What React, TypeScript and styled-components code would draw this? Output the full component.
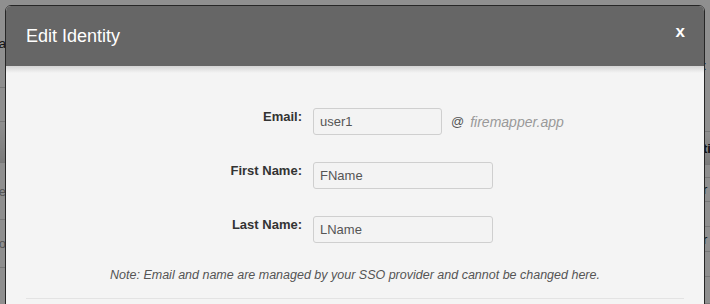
import styled, { createGlobalStyle } from "styled-components";

const GlobalStyle = createGlobalStyle`
  html, body {
    margin: 0;
    padding: 0;
    width: 710px;
    height: 304px;
    overflow: hidden;
    font-family: "Liberation Sans", Arial, Helvetica, sans-serif;
    background: #fff;
  }
`;

// page behind the dialog, only its edges are visible
const PageBehind = styled.div`
  display: flex;
  justify-content: space-between;
  width: 710px;
  height: 304px;
  background: #fff;
`;

const PageCol = styled.div<{ $side: "left" | "right" }>`
  width: ${(p) => (p.$side === "left" ? "6px" : "8px")};
  display: flex;
  flex-direction: column;
  overflow: hidden;
`;

const PageRow = styled.div<{ $h: number; $head?: boolean; $side: "left" | "right" }>`
  height: ${(p) => p.$h}px;
  flex: none;
  box-sizing: border-box;
  border-bottom: 1px solid #d6d6d6;
  background: ${(p) => (p.$head ? "linear-gradient(#ffffff, #dcdcdc)" : "#fff")};
  display: flex;
  align-items: center;
  justify-content: ${(p) => (p.$side === "left" ? "flex-end" : "flex-start")};
  white-space: nowrap;
  font-size: 13px;
  font-weight: ${(p) => (p.$head ? 700 : 400)};
  color: #222;
  padding-left: ${(p) => (p.$side === "right" ? "1px" : "0")};
`;

const Faint = styled.span`
  color: #999;
`;

const Backdrop = styled.div`
  position: fixed;
  inset: 0;
  background: rgba(0, 0, 0, 0.44);
`;

const Modal = styled.div`
  position: fixed;
  top: 5px;
  left: 5px;
  width: 700px;
  height: 330px;
  box-sizing: border-box;
  border: 1px solid #262626;
  border-radius: 6px;
  overflow: hidden;
  background: #f4f4f4;
  display: flex;
  flex-direction: column;
`;

const Header = styled.div`
  height: 60px;
  flex: none;
  background: #666;
  display: flex;
  align-items: center;
  justify-content: space-between;
  padding: 0 19px 0 20px;
  color: #fff;
`;

const Title = styled.h4`
  margin: 0;
  font-size: 18px;
  font-weight: 400;
  padding-top: 1px;
`;

const CloseButton = styled.button`
  background: none;
  border: none;
  padding: 0;
  margin-top: -10px;
  color: #fff;
  font-family: inherit;
  font-size: 17px;
  font-weight: 700;
  line-height: 1;
  cursor: pointer;
`;

const Body = styled.div`
  padding: 42px 20px 0;
  background: linear-gradient(#d4d4d4, #f4f4f4 7px);
  display: flex;
  flex-direction: column;
`;

const FormRow = styled.div`
  display: grid;
  grid-template-columns: 276px auto;
  column-gap: 11px;
  align-items: start;
  margin-bottom: 27px;
`;

const Label = styled.label`
  text-align: right;
  font-size: 13px;
  font-weight: 700;
  line-height: 18px;
  color: #333;
`;

const Field = styled.div`
  display: flex;
  align-items: center;
`;

const Input = styled.input<{ $w: number }>`
  width: ${(p) => p.$w}px;
  height: 27px;
  box-sizing: border-box;
  border: 1px solid #cfcfcf;
  border-radius: 3px;
  background: #f3f3f3;
  padding: 0 6px;
  font-family: "Liberation Sans", Arial, sans-serif;
  font-size: 13px;
  color: #555;
  outline: none;
`;

const At = styled.span`
  margin-left: 9px;
  font-size: 13px;
  color: #555;
`;

const Domain = styled.span`
  margin-left: 6px;
  font-size: 14px;
  font-style: italic;
  color: #999;
`;

const Note = styled.p`
  margin: -3px 0 0;
  text-align: center;
  font-size: 12.5px;
  font-style: italic;
  line-height: 17px;
  color: #555;
`;

const Divider = styled.hr`
  margin: 14px 0 0;
  border: none;
  border-top: 1px solid #e3e3e3;
`;

const leftRows = [
  { h: 88, text: "a" },
  { h: 34 },
  { h: 41, head: true },
  { h: 57, text: "e", faint: true },
  { h: 48, text: "o", faint: true },
  { h: 40 },
];

const rightRows = [
  { h: 132, text: ":" },
  { h: 33, text: "ti", head: true },
  { h: 13 },
  { h: 24, text: "r" },
  { h: 25 },
  { h: 25, text: "r" },
  { h: 25 },
  { h: 27 },
];

export default function App() {
  return (
    <>
      <GlobalStyle />
      <PageBehind>
        <PageCol $side="left">
          {leftRows.map((r, i) => (
            <PageRow key={i} $h={r.h} $head={r.head} $side="left">
              {r.faint ? <Faint>{r.text}</Faint> : r.text}
            </PageRow>
          ))}
        </PageCol>
        <PageCol $side="right">
          {rightRows.map((r, i) => (
            <PageRow key={i} $h={r.h} $head={r.head} $side="right">
              {r.text}
            </PageRow>
          ))}
        </PageCol>
      </PageBehind>
      <Backdrop />
      <Modal>
        <Header>
          <Title>Edit Identity</Title>
          <CloseButton>x</CloseButton>
        </Header>
        <Body>
          <FormRow>
            <Label htmlFor="email">Email:</Label>
            <Field>
              <Input id="email" $w={129} defaultValue="user1" />
              <At>@</At>
              <Domain>firemapper.app</Domain>
            </Field>
          </FormRow>
          <FormRow>
            <Label htmlFor="firstName">First Name:</Label>
            <Field>
              <Input id="firstName" $w={180} defaultValue="FName" />
            </Field>
          </FormRow>
          <FormRow>
            <Label htmlFor="lastName">Last Name:</Label>
            <Field>
              <Input id="lastName" $w={180} defaultValue="LName" />
            </Field>
          </FormRow>
          <Note>
            Note: Email and name are managed by your SSO provider and cannot be changed here.
          </Note>
          <Divider />
        </Body>
      </Modal>
    </>
  );
}
